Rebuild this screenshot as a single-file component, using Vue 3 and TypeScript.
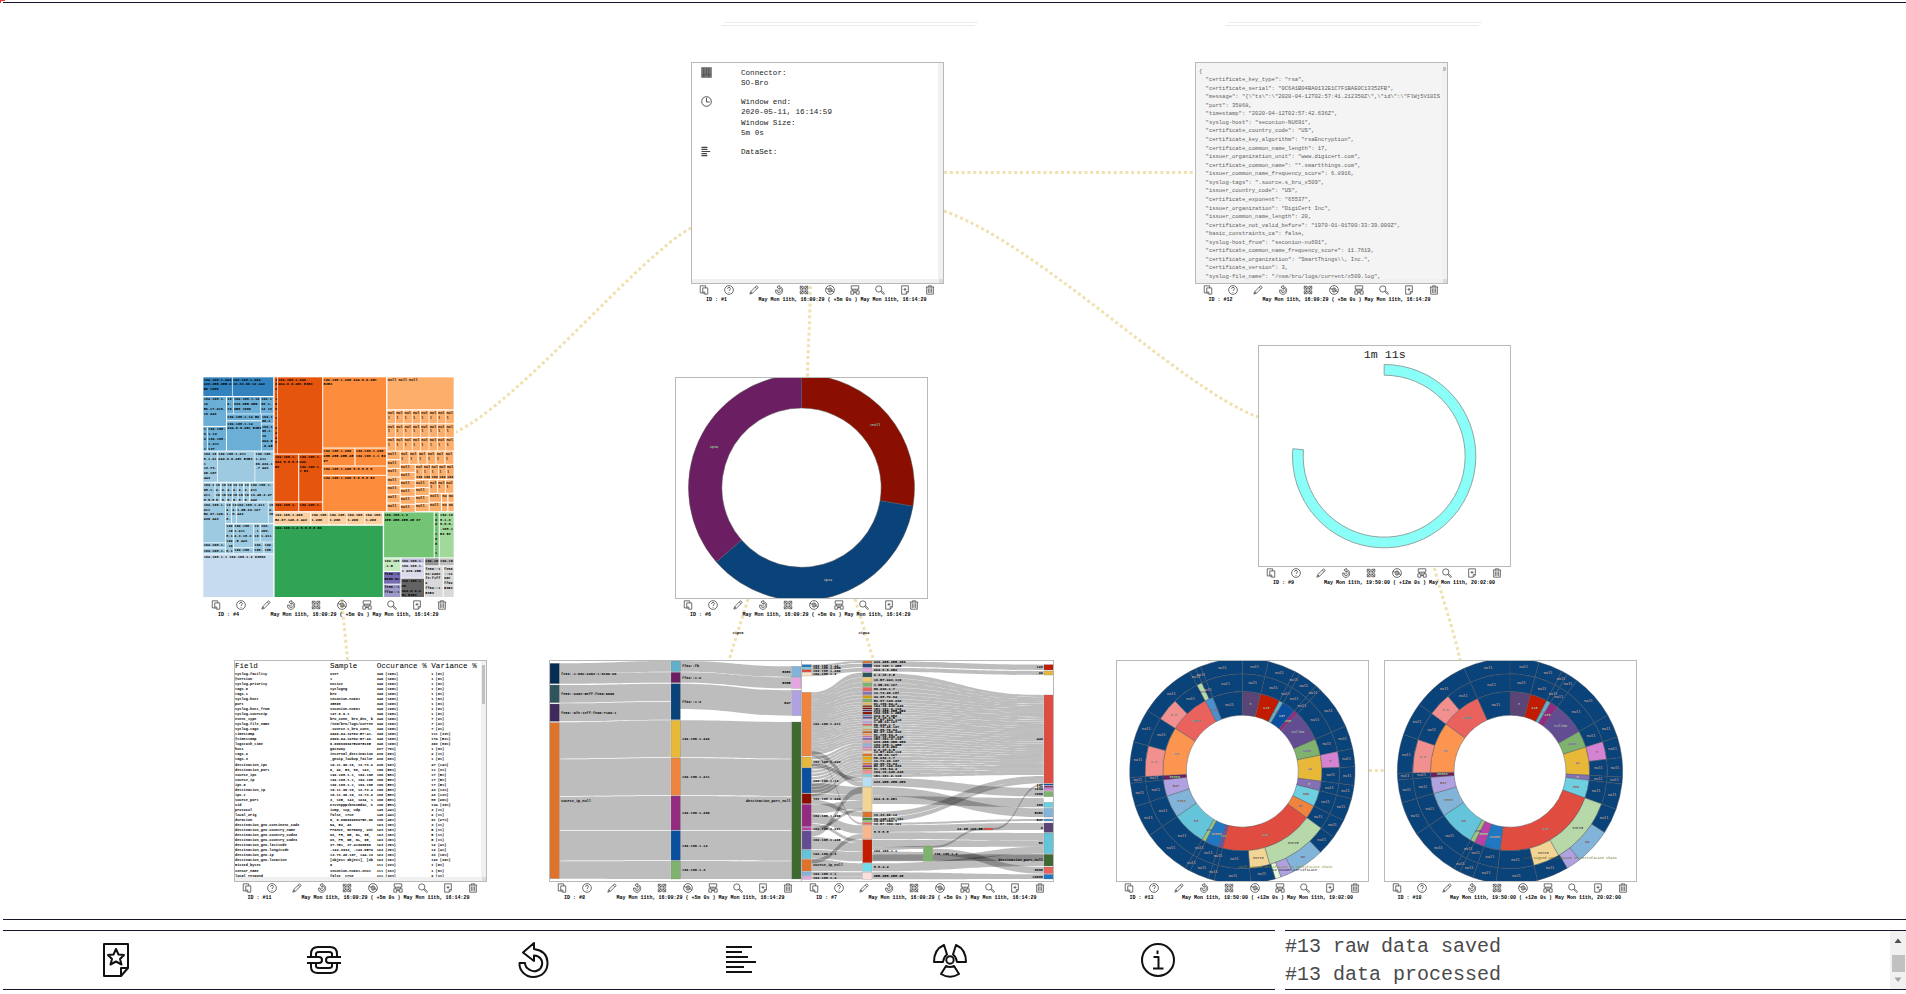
<script setup lang="ts">
type Kind = 'info' | 'json' | 'treemap' | 'donut' | 'timer' | 'table' | 'sankeyA' | 'sankeyB' | 'burstA' | 'burstB'
interface Card { id: number; x: number; y: number; kind: Kind; span: string }

const early = 'May Mon 11th, 16:09:29 ( +5m 0s ) May Mon 11th, 16:14:29'
const late = 'May Mon 11th, 19:50:00 ( +12m 0s ) May Mon 11th, 20:02:00'
const mid = 'May Mon 11th, 18:50:00 ( +12m 0s ) May Mon 11th, 19:02:00'

const cards: Card[] = [
  { id: 1, x: 691, y: 62, kind: 'info', span: early },
  { id: 12, x: 1195, y: 62, kind: 'json', span: early },
  { id: 4, x: 203, y: 377, kind: 'treemap', span: early },
  { id: 6, x: 675, y: 377, kind: 'donut', span: early },
  { id: 9, x: 1258, y: 345, kind: 'timer', span: late },
  { id: 11, x: 234, y: 660, kind: 'table', span: early },
  { id: 8, x: 549, y: 660, kind: 'sankeyA', span: early },
  { id: 7, x: 801, y: 660, kind: 'sankeyB', span: early },
  { id: 13, x: 1116, y: 660, kind: 'burstA', span: mid },
  { id: 10, x: 1384, y: 660, kind: 'burstB', span: late },
]

const links = [
  'M691 228C640 255 520 402 454 433',
  'M944 172.5H1195',
  'M944 211C1040 245 1180 388 1258 417',
  'M810.3 286C810.3 320 808 340 807.5 377',
  'M342 599C343.5 625 345.5 635 347.5 660',
  'M748 599L729 660',
  'M855 599L873.5 660',
  'M1434.5 568C1440 592 1454 630 1460 660',
  'M1369 770.5H1384',
]

const actions = [
  'M3 2H16V7M3 2V19H10M9 7H21V22H13L9 18ZM9 17H14V22',
  'M12 1.5A10.5 10.5 0 1 0 12 22.5A10.5 10.5 0 1 0 12 1.5M8.5 9C8.5 4.500 15.500 4.500 15.500 9C15.500 12 12 11.500 12 14.500M12 17V19',
  'M2 22L4 16L17 3C19 1 23 5 21 7L8 20ZM4 16L8 20M15 5L19 9',
  'M13 1L7 5L13 10V7C20 8 19 18 12 18C8 18 7 15 8 12H4C2 18 7 22.500 12 22.500C23 22 24 5 13 4ZM12 11V15',
  'M3 3H10V10H3ZM14 3H21V10H14ZM3 14H10V21H3ZM14 14H21V21H14ZM3 3L10 10M21 3L14 10M3 21L10 14M21 21L14 14',
  'M12 1.500A10.500 10.500 0 1 0 12 22.500A10.500 10.500 0 1 0 12 1.500M7 10C9 6 15 6 17 10V14C15 18 9 18 7 14M12 9A3 3 0 1 0 12 15A3 3 0 1 0 12 9M2 8L9 11M22 17L15 13',
  'M3 2H21V10H3ZM6 10V14M18 10V14M12 10V17M2 14H9V22H2ZM15 14H22V22H15ZM9 18H15',
  'M9 2A7.500 7.500 0 1 0 9 17A7.500 7.500 0 1 0 9 2M14.500 15L16 14L23 21L21 23L14 16',
  'M4 2H20V17L15 22H4ZM20 16H15V22M12 7V14M8.500 10.500H15.500',
  'M2 5H22M8 5V2H16V5M4 5V22H20V5M8 8V19M12 8V19M16 8V19',
]

const json = `{
  "certificate_key_type": "rsa",
  "certificate_serial": "0C6A1B04BA0132E1C7F1BAE0C13352FB",
  "message": "{\\"ts\\":\\"2020-04-12T02:57:41.212350Z\\",\\"id\\":\\"FlWj5V10IS
  "port": 35868,
  "timestamp": "2020-04-12T02:57:42.636Z",
  "syslog-host": "seconion-NU691",
  "certificate_country_code": "US",
  "certificate_key_algorithm": "rsaEncryption",
  "certificate_common_name_length": 17,
  "issuer_organization_unit": "www.digicert.com",
  "certificate_common_name": "*.smartthings.com",
  "issuer_common_name_frequency_score": 6.8916,
  "syslog-tags": ".source.s_bro_x509",
  "issuer_country_code": "US",
  "certificate_exponent": "65537",
  "issuer_organization": "DigiCert Inc",
  "issuer_common_name_length": 20,
  "certificate_not_valid_before": "1970-01-01T00:33:39.000Z",
  "basic_constraints_ca": false,
  "syslog-host_from": "seconion-nu691",
  "certificate_common_name_frequency_score": 11.7619,
  "certificate_organization": "SmartThings\\\\, Inc.",
  "certificate_version": 3,
  "syslog-file_name": "/nsm/bro/logs/current/x509.log",`

const rows = `syslog-facility|user|340 (100%)|1 (0%)
@version|1|340 (100%)|1 (0%)
syslog-priority|notice|340 (100%)|1 (0%)
tags.0|syslogng|340 (100%)|1 (0%)
tags.1|bro|340 (100%)|1 (0%)
syslog-host|seconion-nu691|340 (100%)|1 (0%)
port|35868|340 (100%)|1 (0%)
syslog-host_from|seconion-nu691|340 (100%)|1 (0%)
syslog-sourceip|127.0.0.1|340 (100%)|1 (0%)
event_type|bro_conn, bro_dns, b|340 (100%)|7 (2%)
syslog-file_name|/nsm/bro/logs/curren|340 (100%)|7 (2%)
syslog-tags|.source.s_bro_conn, |340 (100%)|7 (2%)
timestamp|2020-04-12T02:57:41.|340 (100%)|111 (33%)
@timestamp|2020-04-12T02:57:42.|340 (100%)|174 (51%)
logstash_time|0.00099992752075195|340 (100%)|303 (89%)
host|gateway|237 (70%)|1 (0%)
tags.2|internal_destination|236 (69%)|2 (1%)
tags.3|_geoip_lookup_failur|236 (69%)|1 (0%)
destination_ips|10.11.96.10, 13.73.2|236 (69%)|47 (14%)
destination_port|0, 22, 53, 80, 123, |196 (58%)|11 (3%)
source_ips|192.168.1.1, 192.168|196 (58%)|17 (5%)
source_ip|192.168.1.1, 192.168|196 (58%)|17 (5%)
ips.0|192.168.1.1, 192.168|196 (58%)|17 (5%)
destination_ip|10.11.96.10, 13.73.2|196 (58%)|43 (13%)
ips.1|10.11.96.10, 13.73.2|196 (58%)|43 (13%)
source_port|3, 135, 143, 1234, 1|196 (58%)|88 (26%)
uid|C1vvnppptbncumd2c, C|196 (58%)|134 (39%)
protocol|icmp, tcp, udp|149 (44%)|3 (1%)
local_orig|false, true|149 (44%)|2 (1%)
duration|0, 0.00029206275e-02|136 (40%)|91 (27%)
destination_geo.continent_code|NA, EU, AS|123 (36%)|3 (1%)
destination_geo.country_name|France, Germany, Uni|123 (36%)|5 (1%)
destination_geo.country_code2|US, FR, DE, NL, IE, |123 (36%)|5 (1%)
destination_geo.country_code3|US, FR, DE, NL, IE, |123 (36%)|5 (1%)
destination_geo.latitude|37.751, 37.41920000|123 (36%)|12 (4%)
destination_geo.longitude|-122.3933, -122.0574|123 (36%)|12 (4%)
destination_geo.ip|13.73.26.107, 144.13|123 (36%)|33 (10%)
destination_geo.location|[object Object], [ob|123 (36%)|123 (36%)
missed_bytes|0|111 (33%)|1 (0%)
sensor_name|seconion-nu691-eno1|111 (33%)|1 (0%)
local_respond|false, true|111 (33%)|2 (1%)`.split('\n').map(r => r.split('|'))

// ---- treemap -------------------------------------------------------------
type Tile = [number, number, number, number, string, string]
const B1 = '#3182bd', B2 = '#6baed6', B3 = '#9ecae1', B4 = '#c6dbef'
const O1 = '#e6550d', O2 = '#fd8d3c', O3 = '#fdae6b', O4 = '#fdd0a2'
const tiles: Tile[] = [
  [40, 38, 126, 94, B1, '192.168.1.222 239.255.255.2 50 1900'], [128, 38, 250, 94, B1, '192.168.1.222 13.33.66.12 443'],
  [40, 97, 108, 184, B2, '192.168.1. 12 52.17.210. 19 443'], [111, 97, 129, 147, B2, '19 2. 16'], [131, 97, 211, 147, B2, '192.168.1.12 239.255.255. 250 1900'], [213, 97, 250, 147, B2, '192.1 68.1. 12 13'],
  [111, 149, 213, 167, B2, '192.168.1.12 52'], [111, 170, 213, 258, B2, '192.168.1.12 224.0.0.251 5353'], [215, 149, 250, 177, B2, '192.1 66.1'], [215, 179, 250, 258, B2, '192.1 68.1. 12 224.0 .0.25 1 53'],
  [40, 187, 52, 258, B2, '1 9 2 . 1'], [54, 187, 108, 258, B2, '192.168. 1.12 192.168. 1.211 137'],
  [40, 261, 82, 352, B3, '192.16 8.1.21 1 13.73. 26.107 443'], [84, 261, 194, 352, B3, '192.168.1.211 224.0.0.251 5353'], [196, 261, 250, 352, B3, '192.168. 1.211 66.232.1 .7 443'],
  [40, 355, 74, 411, B3, '192.1 68.1. 211 8.8.8'], ...[76, 94, 111, 128, 145, 163].map((x): Tile => [x, 355, x + 15, 411, B3, '19 2. 16 8.']), [181, 355, 250, 411, B3, '192.168.1. 211 13.46.3.27 443'],
  [40, 414, 106, 534, B3, '192.168.1. 211 52.97.146. 230 443'], [108, 414, 124, 476, B3, '19 2. 1. 8.'], [126, 414, 138, 476, B3, '19 2. 8.'], [140, 414, 234, 476, B3, '192.168.1.211 1.65.33.127 443'], [236, 414, 250, 476, B3, '19 2. 16'],
  [40, 536, 106, 549, B3, '192.168.1.'], [40, 552, 106, 567, B3, '192.168.1.'], [108, 479, 130, 567, B3, '192 .16 8.1 192 .16 8.1'], [132, 479, 190, 549, B3, '192.168. 1.211 2.3.18.3 .5 443'], [192, 479, 210, 532, B3, '19 .1 19 8.'], [212, 479, 250, 532, B3, '192. 168. 1.211'], [132, 551, 190, 567, B3, '192.168.'], [192, 534, 221, 567, B3, '192. 168.'], [223, 534, 250, 567, B3, '192. 168.'],
  [40, 570, 250, 698, B4, '192.168.1.1 192.168.1.2 63863'],
  [254, 38, 262, 267, O1, '1 9 2 . 1 6 8 . 1 . 2 2 2 2'], [264, 38, 397, 267, O1, '192.168.1.222 224.0.0.251 5353'], [254, 270, 325, 411, O1, '192.168.1. 222 8.8.8.8 53'], [328, 270, 397, 411, O1, '192.168.1. 222 192.168.1. 1 53'], [254, 414, 325, 440, O1, '192.168.1. 222'], [328, 414, 397, 440, O1, '192.168.1. 222'],
  [400, 38, 589, 249, O2, '192.168.1.206 224.0.0.251 5353'], [400, 252, 494, 303, O2, '192.168.1.206 255.255.255.25 67'], [497, 252, 589, 303, O2, '192.168.1.206 192.168.1.1 53'], [400, 306, 589, 331, O2, '192.168.1.206 8.8.8.8 0'], [400, 334, 589, 440, O2, '192.168.1.206 8.8.8.8 53'],
  [593, 38, 792, 134, O3, 'null null null'],
  ...Array.from({ length: 24 }, (_, i): Tile => { const x = 593 + (i % 8) * 25.2, y = 138 + Math.floor(i / 8) * 41; return [x, y, x + 23, y + 38, O3, 'nul l 192'] }),
  ...Array.from({ length: 7 }, (_, i): Tile => [593, 261 + i * 26, 630, 284 + i * 26, O3, 'null null']),
  ...Array.from({ length: 6 }, (_, i): Tile => [633 + i * 26.800, 261, 657 + i * 26.800, 298, O3, 'nul l 19']),
  ...Array.from({ length: 6 }, (_, i): Tile => [633, 301 + i * 24, 675, 322 + i * 24, O3, 'null null']),
  ...Array.from({ length: 5 }, (_, i): Tile => [678 + i * 23.200, 301, 699 + i * 23.200, 344, O3, 'nul l 192']),
  ...Array.from({ length: 4 }, (_, i): Tile => [678, 347 + i * 24, 717, 368 + i * 24, O3, 'null null']),
  ...Array.from({ length: 3 }, (_, i): Tile => [720 + i * 24.500, 347, 742 + i * 24.500, 385, O3, 'nul l 8.']),
  [720, 388, 754, 412, O3, 'null 192'], [720, 415, 754, 440, O3, 'null 192'], [757, 388, 773, 412, O3, 'nu ll'], [776, 388, 792, 412, O3, 'nu ll'], [757, 415, 773, 440, O3, 'nu ll'], [776, 415, 792, 440, O3, 'nu ll'],
  [254, 444, 361, 480, O4, '192.168.1.200 52.97.146.3 443'], ...[364, 418, 472, 526].map((x): Tile => [x, 444, x + 52, 480, O4, '192.168. 1.200']),
  [254, 484, 579, 698, '#31a354', '192.168.1.2 8.8.8.8 53'], [583, 444, 732, 579, '#74c476', '192.168.1.3 255.255.255.25 67'], [735, 444, 747, 579, '#74c476', '1 9 2 . 1 6 8 . 1 .'], [750, 444, 792, 579, '#a1d99b', '192.16 8.1.3 8.8.8. .168.1 53 53'],
  [583, 582, 632, 620, '#c7e9c0', '192.168 .1.5'], [583, 623, 632, 658, '#756bb1', 'fe80::1 5000:acd'], [583, 661, 632, 698, '#9e9ac8', 'fe80::1 ff02::1'],
  [635, 582, 703, 595, '#bcbddc', '192.168.1.'], [635, 597, 703, 640, '#dadaeb', '192.168.1. 1 239.255.'], [635, 643, 703, 698, '#636363', '192.168.1. 20 224.0.0.2 51 5353'],
  [706, 582, 747, 603, '#969696', '192.16'], [750, 582, 792, 603, '#bdbdbd', '192.16'], [706, 606, 759, 698, '#d9d9d9', 'fe80::1 ec:22ae fe:f1ff 2 ff02::1 5353'], [762, 606, 792, 698, '#d9d9d9', 'fe80 ::1c 2ae ff02 5353'],
]
function tileLines(t: Tile): string[] {
  const cols = Math.max(1, Math.round((t[2] - t[0] - 2) / 6.42))
  const out: string[] = []
  for (const w of t[5].split(' ')) {
    const last = out[out.length - 1]
    if (last !== undefined && last.length + w.length + 1 <= cols) out[out.length - 1] = last + ' ' + w
    else out.push(w.slice(0, cols))
  }
  return out.slice(0, Math.max(1, Math.floor((t[3] - t[1]) / 13.5)))
}

// ---- radial charts -------------------------------------------------------
function pt(cx: number, cy: number, r: number, deg: number): string {
  const a = (deg * Math.PI) / 180
  return `${(cx + r * Math.sin(a)).toFixed(1)} ${(cy - r * Math.cos(a)).toFixed(1)}`
}
function wedge(cx: number, cy: number, r0: number, r1: number, a0: number, a1: number): string {
  const big = a1 - a0 > 180 ? 1 : 0
  return `M${pt(cx, cy, r1, a0)}A${r1} ${r1} 0 ${big} 1 ${pt(cx, cy, r1, a1)}L${pt(cx, cy, r0, a1)}A${r0} ${r0} 0 ${big} 0 ${pt(cx, cy, r0, a0)}Z`
}

const navy = '#0a427a'
type Slice = [number, string, string, string]
interface Arc { d: string; fill: string; label: string; ink: string; x: number; y: number }
function ring(cx: number, r0: number, r1: number, slices: Slice[]): Arc[] {
  let a = 0
  return slices.map(([end, fill, label, ink]) => {
    const m = (((a + end) / 2) * Math.PI) / 180
    const r = (r0 + r1) / 2
    const arc = { d: wedge(cx, 363.5, r0, r1, a, end), fill, label, ink, x: cx + r * Math.sin(m), y: 363.5 - r * Math.cos(m) + 3 }
    a = end
    return arc
  })
}
const nil = (...ends: number[]): Slice[] => ends.map((e): Slice => [e, navy, 'null', '#ffc49c'])

const burstA: Arc[] = [
  ...ring(412, 168, 239, [
    [13.4, '#5b4476', '3', '#9fd08a'], [27.8, '#c11c00', '123', '#7ff'], [30.7, '#62b0c9', '22', '#b44'], [40.8, '#0b4f9f', '137', '#fdb'], [43.7, '#932b80', '138', '#8f8'], [66.4, '#634d92', 'null00', '#b6dba0'],
    [78.4, '#7fb26e', '1900', '#84c'], [97.3, '#e8b839', '22', '#22f'], [104.2, '#8570b5', '0', '#dd6'], [116, '#6dcfe0', '389', '#a22'], [125.9, '#ef843e', '67', '#26c'], [194.5, '#e04c40', '443', '#3cc'],
    [197.5, '#6e549c', '138', '#9c4'], [207.7, '#2077c2', '10000', '#fa6'], [210.5, '#9bc67e', '136', '#528'], [235.3, '#63c4da', '53', '#b22'], [251.7, '#82b3d8', '5353', '#852'], [263.8, '#b0a2e0', '547', '#530'],
    [266.8, '#6b1f62', '00000', '#8f8'], [302.6, '#fb954f', '80', '#48d'], [332.3, '#ea625e', '8080', '#2aa'], [338.2, '#4a90cf', '443', '#b53'], ...nil(360),
  ]),
  ...ring(412, 239, 292, [
    ...nil(13.4, 27.8, 30.7, 40.8, 43.7, 66.4, 78.4), [87.8, '#d582d2', '3', '#373'], ...nil(97.3, 104.2, 116, 125.9), [163.6, '#b7d9aa', 'eurv3', '#102'], [175.7, '#f2d594', 'eurv3', '#113'],
    ...nil(194.5, 197.5, 207.7, 210.5, 235.3, 251.7, 263.8, 266.8), [285.1, '#f29090', 'n.n', '#276'], ...nil(302.6), [316.2, '#f29090', 'n.n', '#276'], ...nil(332.2), [335.4, '#b7d9aa', 'eurv3', '#315'], ...nil(338.2, 360),
  ]),
  ...ring(412, 292, 338, [
    ...nil(13.4, 27.8, 30.7, 40.8, 43.7, 66.4, 78.4, 87.8, 97.3, 104.2, 116, 125.9, 136.1), [153.4, '#82b3d8', 'OK', '#722'], [160, '#b0a2e0', '', '#000'], [163, '#e3fadb', '', '#000'],
    ...nil(175.7, 194.5, 197.5, 207.7, 210.5, 235.3, 251.7, 263.8, 266.8, 285.1, 302.6, 332.2, 335.4, 338.2, 360),
  ]),
]
const burstB: Arc[] = [
  ...ring(405, 168, 239, [
    [14.9, '#5b4476', '3', '#9fd08a'], [27.5, '#c11c00', '123', '#7ff'], [30.6, '#62b0c9', '22', '#b44'], [36.4, '#932b80', '138', '#8f8'], [60.2, '#634d92', 'null00', '#b6dba0'], [72.4, '#7fb26e', '1900', '#84c'],
    [93, '#e8b839', '22', '#22f'], [96.6, '#8570b5', '0', '#dd6'], [109.7, '#6dcfe0', '389', '#a22'], [187.2, '#e04c40', '443', '#3cc'], [199.2, '#2077c2', '10000', '#fa6'], [206.5, '#b940a5', '8000', '#8f8'],
    [209.8, '#9bc67e', '136', '#528'], [236.1, '#63c4da', '53', '#b22'], [253.7, '#82b3d8', '5353', '#852'], [265.6, '#b0a2e0', '547', '#530'], [269, '#6b1f62', '00000', '#8f8'], [306.4, '#fb954f', '80', '#48d'], [336, '#ea625e', '8080', '#2aa'], ...nil(360),
  ]),
  ...ring(405, 239, 292, [
    ...nil(14.9, 27.5, 30.6, 36.4, 60.2, 72.4), [83, '#d582d2', '3', '#373'], ...nil(93, 96.6, 109.7), [150, '#b7d9aa', 'eurv3', '#102'], [165.8, '#f2d594', 'eurv3', '#113'],
    ...nil(187.2, 199.2, 206.5, 209.8, 236.1, 253.7, 265.6, 269), [289, '#f29090', 'n.n', '#276'], ...nil(306.4), [320.4, '#f29090', 'n.n', '#276'], ...nil(336, 360),
  ]),
  ...ring(405, 292, 338, [
    ...nil(14.9, 27.5, 30.6, 36.4, 60.2, 72.4, 83, 93, 96.6, 109.7, 123), [142, '#82b3d8', 'OK', '#722'], [149.5, '#b0a2e0', '', '#000'],
    ...nil(165.8, 187.2, 199.2, 206.5, 209.8, 236.1, 253.7, 265.6, 269, 289, 306.4, 336, 360),
  ]),
]

// ---- sankey --------------------------------------------------------------
function band(x0: number, a0: number, a1: number, x1: number, b0: number, b1: number): string {
  const m = (x0 + x1) / 2
  return `M${x0} ${a0}C${m} ${a0} ${m} ${b0} ${x1} ${b0}V${b1}C${m} ${b1} ${m} ${a1} ${x0} ${a1}Z`
}
type Bar = [number, number, number, string, string, 0 | 1]
const barsA: Bar[] = [
  [30, 40, 101, '#052c51', 'fe80::1:aac:22ae:1:a1aa:20', 0], [30, 105, 158, '#2f545b', 'fe80::22ae:5eff:feaa:aaaa', 0], [30, 162, 214, '#3d2a5a', 'fe80::afe:1eff:feaa:71aa:1', 0], [30, 218, 686, '#df732c', 'source_ip_null', 0],
  [393, 33, 65, '#62b0c9', 'ff02::fb', 0], [393, 67, 98, '#6b1f62', 'ff02::1:2', 0], [393, 101, 209, '#0a427a', 'ff02::1:3', 0], [393, 211, 322, '#e8b839', '192.168.1.222', 0], [393, 324, 436, '#ef843e', '192.168.1.211', 0], [393, 438, 540, '#932b80', '192.168.1.206', 0], [393, 542, 631, '#0b4f9f', '192.168.1.12', 0], [393, 633, 687, '#7fb26e', '192.168.1.3', 0],
  [755, 49, 81, '#82b3d8', '5353', 1], [755, 82, 115, '#e4a5e0', '5355', 1], [755, 121, 197, '#b0a2e0', '547', 1], [755, 216, 687, '#406831', 'destination_port_null', 1],
]
const bandsA = [
  [40, 70, 33, 65], [70.5, 101, 67, 98], [105, 158, 101, 153], [160, 214, 155, 209], [217, 326, 211, 322], [328, 438, 324, 436], [440, 541, 438, 540], [543, 632, 542, 631], [634, 686, 633, 687],
].map(b => band(58, b[0], b[1], 392, b[2], b[3])).concat([
  [33, 65, 49, 81], [67, 98, 82, 115], [101, 177, 121, 197], [211, 322, 216, 326], [324, 436, 328, 438], [438, 540, 440, 541], [542, 631, 543, 632], [633, 687, 634, 687],
].map(b => band(420, b[0], b[1], 754, b[2], b[3])))

const hues = ['#df732c', '#2c4a80', '#dfa3dc', '#2f545b', '#efc76c', '#7fb26e', '#ea625e', '#8570b5', '#cf9d10', '#7fb26e', '#e5b84d', '#8c3b1b', '#7a1510', '#3d2a6a', '#8a0f00', '#4a90cf', '#634d92', '#e4c5ea', '#b0a2e0', '#ea625e', '#b7d9aa', '#d9b266', '#c45a1c', '#fb954f', '#c774c4', '#8570b5', '#ee9a93', '#82b3d8', '#c985cc', '#f29090', '#f8e5c0', '#df732c', '#dfa900', '#e0b03a', '#df732c', '#932b80', '#8c6500', '#f29090', '#82cfe0']
const edges = [33, 41, 54, 68, 83, 98, 112, 125, 136, 147, 158, 166, 173, 180, 186, 195, 200, 208, 214, 222, 229, 237, 244, 251, 258, 264, 272, 280, 289, 297, 304, 311, 320, 331, 339, 346, 353, 360, 373, 382]
const hosts = ['239.255.255.250', '192.168.1.255', '224.0.0.252', '2.3.18.3.5', '13.57.243.110', '1.65.33.127', '66.232.1.7', '13.73.26.107', '34.98.72.94', '52.97.146.230', '91.189.94.4', '104.16.249.249', '151.101.2.110']
const barsB: Bar[] = [
  [5, 44, 51, '#2077c2', '192.168.1.22', 0], [5, 52, 58, '#6dcfe0', '192.168.1.200', 0], [5, 59, 66, '#e04c40', '192.168.1.202', 0], [5, 67, 78, '#fbe3c4', '192.168.1.2', 0], [5, 127, 318, '#ef843e', '192.168.1.211', 0], [5, 321, 353, '#e8b839', '192.168.1.222', 0], [5, 354, 429, '#0b4f9f', '192.168.1.12', 0], [5, 431, 461, '#8a0f00', '192.168.1.222', 0], [5, 463, 530, '#932b80', '192.168.1.206', 0], [5, 532, 541, '#b940a5', '192.168.1.221', 0], [5, 543, 598, '#634d92', '192.168.1.205', 0], [5, 600, 626, '#63c4da', '192.168.1.3', 0], [5, 628, 663, '#df732c', 'source_ip_null', 0], [5, 665, 677, '#82b3d8', '192.168.1.1', 0], [5, 679, 688, '#e4a5e0', '192.168.1.4', 0],
  ...hues.map((c, i): Bar => [187, edges[i], edges[i + 1] - 2, c, hosts[i % hosts.length], 0]),
  [187, 383, 409, '#b8def4', '239.255.255.250', 0], [187, 411, 484, '#f2d594', '224.0.0.251', 0], [187, 486, 501, '#df732c', '13.33.66.12', 0], [187, 503, 510, '#4b8646', '34.120.171.101', 0], [187, 511, 517, '#9bc67e', '13.67.184.1', 0], [187, 518, 524, '#ea625e', '13.67.102.121', 0], [187, 526, 567, '#f7b890', '8.8.8.8', 0], [187, 569, 638, '#c11c00', '192.168.1.1', 0], [187, 640, 664, '#70dcec', '8.8.4.4', 0], [187, 667, 688, '#fbe0dd', '255.255.255.25', 0],
  [369, 588, 634, '#7fb26e', '192.168.1.2', 0], [550, 534, 540, '#e04c40', '34.95.120.55', 1],
  [731, 44, 60, '#c11c00', '123', 1], [731, 63, 75, '#e8b839', '22', 1], [731, 135, 400, '#e04c40', '443', 1], [731, 402, 406, '#0b4f9f', '137', 1], [731, 408, 413, '#932b80', '138', 1], [731, 414, 422, '#cf86cc', '1234', 1], [731, 424, 440, '#7fb26e', '1900', 1], [731, 457, 472, '#6dcfe0', '389', 1], [731, 475, 501, '#82b3d8', '5353', 1], [731, 507, 513, '#4a90cf', '547', 1], [731, 519, 547, '#5b4476', '0', 1], [731, 549, 611, '#63c4da', '53', 1], [731, 613, 648, '#406831', 'destination_port_null', 1], [731, 651, 671, '#ea625e', '8080', 1], [731, 673, 687, '#2077c2', '10000', 1],
]
const bandsB: string[] = []
for (let i = 3; i < 39; i++) {
  const f = (i - 3) / 36
  const h = edges[i + 1] - edges[i] - 0.8
  const from = i < 27 ? 127 + ((i - 3) / 24) * 187 : 321 + ((i - 27) / 12) * 120
  bandsB.push(band(34, from, from + 7.6, 186, edges[i], edges[i] + h))
  const to = 135 + f * 240
  bandsB.push(band(216, edges[i], edges[i] + h, 730, to, to + 6.5))
}
const extra: number[][] = [
  [34, 44, 51, 186, 33, 39], [34, 52, 66, 186, 41, 52], [34, 67, 78, 186, 54, 65],
  [216, 34, 50, 730, 44, 60], [216, 53, 65, 730, 63, 75],
  [34, 304, 318, 186, 395, 410], [34, 316, 320, 186, 518, 524], [34, 340, 352, 186, 383, 394], [34, 400, 429, 186, 411, 436], [34, 432, 448, 186, 436, 452], [34, 449, 461, 186, 486, 500], [34, 463, 490, 186, 452, 476], [34, 491, 520, 186, 526, 551], [34, 521, 530, 186, 569, 579], [34, 532, 541, 186, 475, 484], [34, 543, 560, 186, 411, 430], [34, 561, 598, 186, 579, 605], [34, 600, 626, 186, 606, 634], [34, 628, 663, 186, 640, 664], [34, 628, 640, 186, 552, 566], [34, 665, 677, 186, 667, 678], [34, 679, 688, 186, 679, 688],
  [216, 383, 409, 730, 414, 440], [216, 411, 437, 730, 475, 501], [216, 438, 462, 730, 444, 472], [216, 486, 501, 730, 378, 392], [216, 503, 517, 730, 392, 400],
  [216, 518, 524, 730, 507, 513], [216, 526, 546, 730, 519, 540], [216, 547, 567, 730, 549, 572], [216, 569, 592, 730, 572, 590], [216, 592, 601, 368, 588, 597], [216, 604, 634, 368, 606, 634], [397, 588, 594, 549, 534, 540], [579, 534, 540, 730, 400, 406],
  [397, 596, 616, 730, 651, 671], [397, 616, 634, 730, 590, 611], [216, 640, 664, 730, 613, 648], [216, 667, 688, 730, 673, 687], [216, 614, 632, 730, 613, 633],
]
for (const e of extra) bandsB.push(band(e[0], e[1], e[2], e[3], e[4], e[5]))

const sankeys: Record<string, { box: string; bands: string[]; bars: Bar[] }> = {
  sankeyA: { box: '30 33 753 660', bands: bandsA, bars: barsA },
  sankeyB: { box: '5 33 753 660', bands: bandsB, bars: barsB },
}
const bursts: Record<string, { box: string; arcs: Arc[] }> = {
  burstA: { box: '36 33 753 660', arcs: burstA },
  burstB: { box: '30 33 753 660', arcs: burstB },
}
const log = ['#13 raw data saved', '#13 data processed']
</script>

<template>
  <div class="app">
    <main class="stage">
      <svg class="wires" width="1906" height="916">
        <path class="red" d="M0 .5H5M.5 0V3" />
        <path class="ghost" d="M724.500 22.500H977.500M721.500 25.500H975M1228.500 22.500H1482M1225.500 25.500H1479" />
        <path v-for="d in links" :key="d" class="wire" :d="d" />
        <text x="738" y="633.500" text-anchor="middle" class="wlabel">#ipv6</text>
        <text x="864" y="633.500" text-anchor="middle" class="wlabel">#ipv4</text>
      </svg>

      <section v-for="c in cards" :key="c.id" class="card" :style="{ left: c.x + 'px', top: c.y + 'px' }">
        <div class="box" :class="c.kind">
          <template v-if="c.kind === 'info'">
            <div class="facts">
              <svg viewBox="0 0 24 24" class="fi"><path d="M1 1H23V23H1Z" fill="#777" stroke="#555" /><path d="M6 2V22M12 2V15M17 2V22M2 17H22" stroke="#333" /></svg>
              <div class="lines"><span>Connector:</span><span>SO-Bro</span></div>
              <svg viewBox="0 0 24 24" class="fi"><path d="M12 1.500A10.500 10.500 0 1 0 12 22.500A10.500 10.500 0 1 0 12 1.500M12 4V13H19" fill="none" stroke="#444" stroke-width="2" /></svg>
              <div class="lines"><span>Window end:</span><span>2020-05-11, 16:14:59</span><span class="gap">Window Size:</span><span>5m 0s</span></div>
              <svg viewBox="0 0 24 24" class="fi"><path d="M1 3H14M1 7.500H14M1 12H20M1 16.500H13M1 21H14" stroke="#444" stroke-width="2.500" /></svg>
              <div class="lines"><span>DataSet:</span></div>
            </div>
            <i class="vbar"></i><i class="hbar"></i>
          </template>
          <template v-else-if="c.kind === 'json'">
            <pre>{{ json }}</pre>
            <i class="vbar"><b class="t1"></b></i><i class="hbar"></i>
          </template>
          <svg v-else-if="c.kind === 'treemap'" viewBox="39 37 757 664" preserveAspectRatio="none">
            <g v-for="(t, i) in tiles" :key="i">
              <rect :x="t[0]" :y="t[1]" :width="t[2] - t[0]" :height="t[3] - t[1]" :fill="t[4]" />
              <text v-for="(l, j) in tileLines(t)" :key="j" :x="t[0] + 1" :y="t[1] + 10 + j * 14.500">{{ l }}</text>
            </g>
          </svg>
          <svg v-else-if="c.kind === 'donut'" viewBox="48 39 753 660">
            <g stroke="#555" stroke-width="1.500">
              <path :d="wedge(424.500, 368, 239, 339, 0, 99.400)" fill="#8a0f00" />
              <path :d="wedge(424.500, 368, 239, 339, 99.400, 228.900)" fill="#0a427a" />
              <path :d="wedge(424.500, 368, 239, 339, 228.900, 360)" fill="#6b1f62" />
            </g>
            <g text-anchor="middle">
              <text x="645" y="183" fill="#8ff">#null</text><text x="504" y="648" fill="#fca">ipv4</text><text x="162" y="249" fill="#9f9">ipv6</text>
            </g>
          </svg>
          <svg v-else-if="c.kind === 'timer'" viewBox="57 33 753 660">
            <path :d="wedge(432.500, 363.500, 243, 275, 0, 274.600)" fill="#8afff8" stroke="#8fa5a5" stroke-width="3" stroke-linejoin="round" />
            <text x="434" y="70" text-anchor="middle" class="clock">1m 11s</text>
          </svg>
          <template v-else-if="c.kind === 'table'">
            <div class="grid head"><span>Field</span><span>Sample</span><span>Occurance %</span><span>Variance %</span></div>
            <div v-for="(r, i) in rows" :key="i" class="grid row"><span v-for="(v, j) in r" :key="j">{{ v }}</span></div>
            <i class="vbar"><b class="t2"></b></i><i class="hbar"></i>
          </template>
          <svg v-else-if="sankeys[c.kind]" :viewBox="sankeys[c.kind].box">
            <path v-for="(d, i) in sankeys[c.kind].bands" :key="i" :d="d" fill="#000" fill-opacity=".26" />
            <g v-for="(b, i) in sankeys[c.kind].bars" :key="'b' + i">
              <rect :x="b[0]" :y="b[1]" width="28" :height="b[2] - b[1]" :fill="b[3]" stroke="#777" stroke-width=".8" />
              <text :x="b[5] ? b[0] - 3 : b[0] + 33" :y="(b[1] + b[2]) / 2 + 3" :text-anchor="b[5] ? 'end' : 'start'">{{ b[4] }}</text>
            </g>
          </svg>
          <svg v-else :viewBox="bursts[c.kind].box">
            <path v-for="(a, i) in bursts[c.kind].arcs" :key="i" :d="a.d" :fill="a.fill" stroke="#4a5258" stroke-width="1.300" />
            <text v-for="(a, i) in bursts[c.kind].arcs" :key="'t' + i" :x="a.x" :y="a.y" :fill="a.ink" text-anchor="middle">{{ a.label }}</text>
            <template v-if="c.kind === 'burstA'">
              <text x="401" y="654" fill="#8a8420">self signed certificate in certificate chain</text>
              <text x="502" y="664" fill="#102">to issuer certificate</text>
            </template>
            <text v-else x="444" y="627" fill="#5d6420">self signed certificate in certificate chain</text>
          </svg>
        </div>
        <div class="acts">
          <svg v-for="d in actions" :key="d" viewBox="0 0 24 24"><path :d="d" /></svg>
        </div>
        <div class="cap"><span>ID : #{{ c.id }}</span><span>{{ c.span }}</span></div>
      </section>
    </main>

    <footer class="foot">
      <nav class="tools">
        <svg viewBox="0 0 36 36"><path d="M6 2H30V26L23 34H6ZM30 26H23V34" /><path d="M18 7L20.500 12.500L26 13L22 17L23.500 22.500L18 19.500L12.500 22.500L14 17L10 13L15.500 12.500Z" /></svg>
        <svg viewBox="0 0 36 36"><path d="M5 14V12C5 7 8 5 12 5H24C28 5 31 7 31 12V14M10 14V12Q10 10 13 10H23Q26 10 26 12V14M1 15H13Q16 15 16 18Q16 21 13 21H1M35 15H23Q20 15 20 18Q20 21 23 21H35M5 22V25C5 29 8 31 12 31H24C28 31 31 29 31 25V22M10 22V24Q10 26 13 26H23Q26 26 26 24V22" /></svg>
        <svg viewBox="0 0 36 36"><path d="M19 1L8 10.500L19 19V13.500C25 14 28 18 27 23C26 28 20 31 15 28C11 26 10 24 10 21H4.500C4 29 11 35 18 35C27 35 33 29 32.500 20C32 12 26 8 19 7Z" /></svg>
        <svg viewBox="0 0 36 36"><path d="M3 5H29M3 10H19M3 15H25M3 20H33M3 25H21M3 30H29" /></svg>
        <svg viewBox="0 0 36 36"><circle cx="18" cy="18" r="3.700" /><path d="M12 3C5 6 2 12 2 20L11 20C11.500 16 13 14 15 12.500ZM24 3C31 6 34 12 34 20L25 20C24.500 16 23 14 21 12.500ZM14 24L9 32Q18 37.500 27 32L22 24Q18 26 14 24Z" /></svg>
        <svg viewBox="0 0 36 36"><circle cx="18" cy="18" r="16" /><path d="M13.500 15H18.500V26M13 26.500H23.500M17.500 8.500V12" /></svg>
      </nav>
      <aside class="log">
        <p v-for="l in log" :key="l">{{ l }}</p>
        <div class="scroll"><svg viewBox="0 0 16 58"><path d="M4.500 12L8 7.500L11.500 12Z" fill="#505050" /><rect x="2" y="24" width="13" height="17" fill="#c1c1c1" /><path d="M4.500 46.500L8 51L11.500 46.500Z" fill="#a3a3a3" /></svg></div>
      </aside>
    </footer>
  </div>
</template>

<style>
body { margin: 0; background: #fff; overflow: hidden; }
</style>

<style scoped>
.app { width: 1906px; height: 994px; display: flex; flex-direction: column; font-family: "Liberation Mono", "Courier New", monospace; color: #000; box-sizing: border-box; padding-top: 2px; }
.stage { position: relative; height: 916px; border-top: 1px solid #15172b; border-bottom: 1px solid #15172b; margin-left: 3px; }
.wires { position: absolute; left: -3px; top: -3px; }
.red { stroke: #e33; fill: none; }
.ghost { stroke: #ececec; fill: none; }
.wire { fill: none; stroke: #efe1b0; stroke-width: 3; stroke-dasharray: 3 2.850; }
.wlabel { font-size: 3.600px; font-weight: 700; }
.card { position: absolute; width: 253px; margin: -3px 0 0 -3px; display: flex; flex-direction: column; }
.box { position: relative; width: 253px; height: 222px; box-sizing: border-box; border: 1px solid #b9b9b9; background: #fff; overflow: hidden; }
.box > svg { display: block; width: 100%; height: 100%; }
.box text { font-size: 10.700px; font-weight: 700; }
.box.donut text, .box.burstA text, .box.burstB text { font-weight: 400; }
.box text.clock { font-size: 35px; font-weight: 400; fill: #222; }
.box.treemap { border-color: transparent; border-left: 0; border-top: 0; }
.box.json { background: #f4f4f4; }
pre { margin: 4.500px 0 0 3px; font: 5.500px/8.565px "Liberation Mono", monospace; color: #606060; }
.facts { display: grid; grid-template-columns: 40px 1fr; row-gap: 9px; padding: 4px 0 0 9px; }
.fi { width: 11px; height: 11px; }
.lines { display: flex; flex-direction: column; font-size: 7.580px; line-height: 10px; padding-top: 1px; margin-bottom: -1px; color: #222; }
.gap { margin-top: 1px; }
.vbar { position: absolute; right: 0; top: 0; width: 5px; height: 100%; background: #f1f1f1; }
.hbar { position: absolute; left: 0; bottom: 0; width: 100%; height: 4px; background: #f0f0f0; border-right: 4px solid #dcdcdc; box-sizing: border-box; }
.vbar b { position: absolute; left: 1px; width: 3px; background: #c1c1c1; }
.t1 { top: 4px; height: 4px; }
.t2 { top: 4px; height: 39px; }
.grid { display: grid; grid-template-columns: 95px 46.700px 54.600px 1fr; white-space: pre; }
.head { font-size: 7.580px; line-height: 11px; height: 10.700px; }
.row { font-size: 3.580px; line-height: 5.060px; height: 5.060px; font-weight: 700; }
.acts { display: grid; grid-template-columns: repeat(10, 25.200px); height: 12px; align-items: center; justify-items: center; }
.acts svg { width: 10px; height: 10px; fill: none; stroke: #505050; stroke-width: 2; }
.cap { display: grid; grid-template-columns: 51px 201px; height: 7px; line-height: 7px; margin-top: 1px; font-size: 5px; font-weight: 700; text-align: center; white-space: pre; }
.foot { display: flex; gap: 10px; margin: 10px 0 0 3px; height: 60px; }
.tools { width: 1272px; box-sizing: border-box; border-top: 1px solid #15172b; border-bottom: 1px solid #15172b; display: grid; grid-template-columns: repeat(6, 208.500px); padding-left: 8.500px; align-items: center; justify-items: center; }
.tools svg { width: 36px; height: 36px; fill: none; stroke: #111; stroke-width: 2; stroke-linejoin: round; }
.log { flex: 1; position: relative; box-sizing: border-box; border-top: 1px solid #15172b; border-bottom: 1px solid #15172b; padding: 2px 0 0 0; }
.log p { margin: 0; font-size: 20px; line-height: 28px; color: #4a4a4a; }
.scroll { position: absolute; right: 0; top: 0; width: 16px; height: 58px; background: #f1f1f1; }
.scroll svg { display: block; }
</style>
